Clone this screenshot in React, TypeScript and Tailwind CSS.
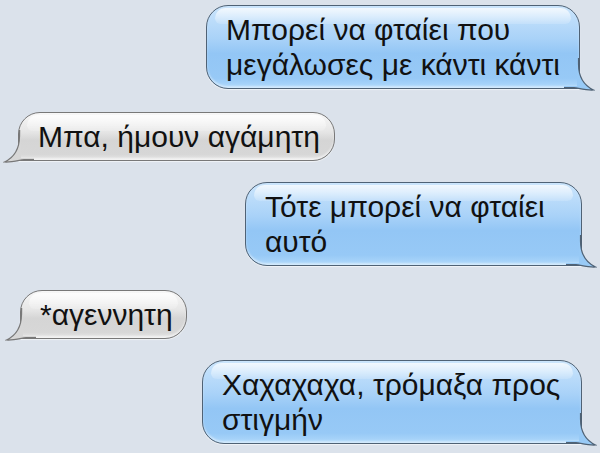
import React from "react";

type Side = "left" | "right";

function Tail({ side, fill, stroke }: { side: Side; fill: string; stroke: string }) {
  const fillD =
    "M13 0 L14.5 0 L14.5 6 C14.5 18 19 27 29.5 32 C23 32.5 16 30.5 10 29.5 L0 29.5 L0 28 L13 28 Z";
  const strokeD = "M14.5 0 L14.5 6 C14.5 18 19 27 29.5 32 C23 32.5 16 30.5 10 29.5 L0 29.5";
  return (
    <svg
      width="31"
      height="34"
      viewBox="0 0 31 34"
      className={side === "right" ? "absolute right-[-16px] bottom-[-4px]" : "absolute left-[-16px] bottom-[-4px]"}
    >
      <g transform={side === "left" ? "translate(31 0) scale(-1 1)" : undefined}>
        <path d={fillD} fill={fill} />
        <path d={strokeD} fill="none" stroke={stroke} strokeWidth="1.2" />
      </g>
    </svg>
  );
}

function Bubble({
  side,
  lines,
  className,
}: {
  side: Side;
  lines: string[];
  className: string;
}) {
  const blue = side === "right";
  return (
    <div
      className={
        "relative border pl-[19px] pr-[16px] py-[6px] rounded-[22px] " +
        (blue
          ? "rounded-br-none border-[#4f6275] bg-[linear-gradient(180deg,#cbe5fc_0%,#a9d2f8_40%,#93c6f5_58%,#97c9f6_88%,#b0d9fb_100%)] shadow-[inset_0_-2px_2px_rgba(255,255,255,0.45),0_1px_1px_rgba(255,255,255,0.6)] "
          : "rounded-bl-none border-[#787878] bg-[linear-gradient(180deg,#f7f7f7_0%,#e6e6e6_40%,#d5d5d5_58%,#d7d7d7_88%,#e8e8e8_100%)] shadow-[inset_0_-2px_2px_rgba(255,255,255,0.5),0_1px_1px_rgba(255,255,255,0.6)] ") +
        className
      }
    >
      <div className="absolute left-[8px] right-[8px] top-[2px] h-[16px] rounded-t-[18px] rounded-b-[10px] bg-[linear-gradient(180deg,rgba(255,255,255,0.75)_0%,rgba(255,255,255,0.15)_100%)]" />
      <Tail
        side={side}
        fill={blue ? "#98caf6" : "#d7d7d7"}
        stroke={blue ? "#4f6275" : "#787878"}
      />
      <div className="relative whitespace-nowrap text-[30px] leading-[35px] text-[#111111] font-['Liberation_Sans',Arial,sans-serif]">
        {lines.map((l, i) => (
          <div key={i}>{l}</div>
        ))}
      </div>
    </div>
  );
}

export default function App() {
  return (
    <div className="w-[600px] h-[453px] overflow-hidden bg-[#dbe2eb] flex flex-col pt-[5px]">
      <Bubble
        side="right"
        lines={["Μπορεί να φταίει που", "μεγάλωσες με κάντι κάντι"]}
        className="self-end mr-[20px] w-[374px]"
      />
      <Bubble side="left" lines={["Μπα, ήμουν αγάμητη"]} className="self-start ml-[18px] mt-[23px] w-[317px]" />
      <Bubble
        side="right"
        lines={["Τότε μπορεί να φταίει", "αυτό"]}
        className="self-end mr-[18px] mt-[21px] w-[337px]"
      />
      <Bubble side="left" lines={["*αγεννητη"]} className="self-start ml-[20px] mt-[24px] w-[167px]" />
      <Bubble
        side="right"
        lines={["Χαχαχαχα, τρόμαξα προς", "στιγμήν"]}
        className="self-end mr-[18px] mt-[21px] w-[380px]"
      />
    </div>
  );
}
